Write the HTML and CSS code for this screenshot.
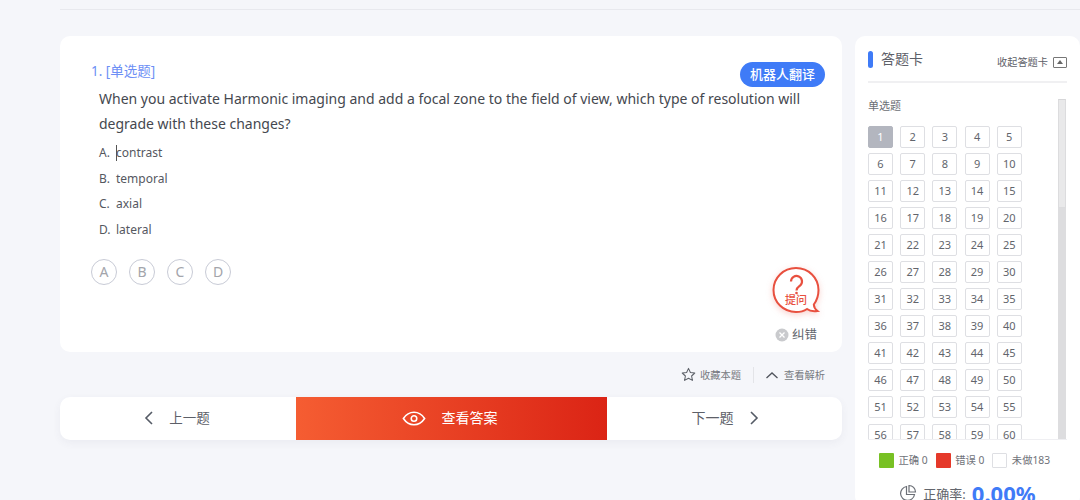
FILE: index.html
```html
<!DOCTYPE html>
<html lang="zh-CN">
<head>
<meta charset="utf-8">
<title>答题</title>
<link rel="stylesheet" href="styles.css">
</head>
<body>
<div class="topline"></div>
<div class="page">
  <main class="main">
    <section class="qcard">
      <div class="qhead">
        <span class="qtype">1. [单选题]</span>
        <span class="translate">机器人翻译</span>
      </div>
      <p class="stem">When you activate Harmonic imaging and add a focal zone to the field of view, which type of resolution will degrade with these changes?</p>
      <ul class="opts">
        <li><span class="ol">A.</span><span class="caret"></span><span>contrast</span></li>
        <li><span class="ol">B.</span><span>temporal</span></li>
        <li><span class="ol">C.</span><span>axial</span></li>
        <li><span class="ol">D.</span><span>lateral</span></li>
      </ul>
      <div class="circles">
        <span class="circle">A</span><span class="circle">B</span><span class="circle">C</span><span class="circle">D</span>
      </div>
      <div class="ask">
        <svg class="ask-bubble" viewBox="0 0 50 50" width="50" height="50">
          <path d="M25 3C12.300 3 2.500 12.800 2.500 25S12.300 47 25 47c4 0 8-1 11-3 2 1.600 6 2.600 10.500 2-2-1.400-3.500-3.500-3.700-6.500C45.800 35.500 47.500 30.500 47.500 25 47.500 12.800 37.700 3 25 3Z" fill="#fff" stroke="#e8503f" stroke-width="2"/>
          <path d="M20 16.500a5.500 5.500 0 1 1 9 4.200c-2.200 1.700-3.500 2.400-3.500 4.800" fill="none" stroke="#e8503f" stroke-width="2.200"/>
          <circle cx="25.500" cy="28" r="1.300" fill="#e8503f"/>
        </svg>
        <span class="ask-t">提问</span>
      </div>
      <div class="report">
        <svg viewBox="0 0 14 14" width="14" height="14"><circle cx="7" cy="7" r="6.500" fill="#c9cacd"/><path d="M4.500 4.500l5 5M9.500 4.500l-5 5" stroke="#fff" stroke-width="1.300"/></svg>
        <span>纠错</span>
      </div>
    </section>
    <div class="tools">
      <span class="tool">
        <svg viewBox="0 0 16 16" width="15" height="15"><path d="M8 1.500l2 4.300 4.700.6-3.400 3.200.9 4.700L8 12l-4.200 2.300.9-4.700L1.300 6.400 6 5.800Z" fill="none" stroke="#5c6068" stroke-width="1.100" stroke-linejoin="round"/></svg>
        <span>收藏本题</span>
      </span>
      <span class="sep"></span>
      <span class="tool tool-b">
        <svg viewBox="0 0 14 14" width="14" height="14"><path d="M1.500 10L7 5l5.500 5" fill="none" stroke="#50545c" stroke-width="1.300"/></svg>
        <span>查看解析</span>
      </span>
    </div>
    <nav class="nav">
      <a class="nav-btn prev">
        <svg viewBox="0 0 10 16" width="10" height="16"><path d="M8 2L2 8l6 6" fill="none" stroke="#555b66" stroke-width="1.600"/></svg>
        <span>上一题</span>
      </a>
      <a class="nav-btn show">
        <svg viewBox="0 0 26 16" width="24" height="15"><path d="M1.500 8C4.500 3.500 8.500 1.300 13 1.300S21.500 3.500 24.500 8C21.500 12.500 17.500 14.700 13 14.700S4.500 12.500 1.500 8Z" fill="none" stroke="#fff" stroke-width="1.700"/><circle cx="13" cy="8" r="3" fill="none" stroke="#fff" stroke-width="1.700"/></svg>
        <span>查看答案</span>
      </a>
      <a class="nav-btn next">
        <span>下一题</span>
        <svg viewBox="0 0 10 16" width="10" height="16"><path d="M2 2l6 6-6 6" fill="none" stroke="#555b66" stroke-width="1.600"/></svg>
      </a>
    </nav>
  </main>
  <aside class="side">
    <header class="side-head">
      <span class="side-title"><i class="bar"></i>答题卡</span>
      <span class="collapse">收起答题卡<span class="collapse-ic"></span></span>
    </header>
    <div class="scroll">
      <div class="list">
        <div class="list-title">单选题</div>
        <div class="grid">
          <span class="cell cur">1</span><span class="cell">2</span><span class="cell">3</span><span class="cell">4</span><span class="cell">5</span>
          <span class="cell">6</span><span class="cell">7</span><span class="cell">8</span><span class="cell">9</span><span class="cell">10</span>
          <span class="cell">11</span><span class="cell">12</span><span class="cell">13</span><span class="cell">14</span><span class="cell">15</span>
          <span class="cell">16</span><span class="cell">17</span><span class="cell">18</span><span class="cell">19</span><span class="cell">20</span>
          <span class="cell">21</span><span class="cell">22</span><span class="cell">23</span><span class="cell">24</span><span class="cell">25</span>
          <span class="cell">26</span><span class="cell">27</span><span class="cell">28</span><span class="cell">29</span><span class="cell">30</span>
          <span class="cell">31</span><span class="cell">32</span><span class="cell">33</span><span class="cell">34</span><span class="cell">35</span>
          <span class="cell">36</span><span class="cell">37</span><span class="cell">38</span><span class="cell">39</span><span class="cell">40</span>
          <span class="cell">41</span><span class="cell">42</span><span class="cell">43</span><span class="cell">44</span><span class="cell">45</span>
          <span class="cell">46</span><span class="cell">47</span><span class="cell">48</span><span class="cell">49</span><span class="cell">50</span>
          <span class="cell">51</span><span class="cell">52</span><span class="cell">53</span><span class="cell">54</span><span class="cell">55</span>
          <span class="cell">56</span><span class="cell">57</span><span class="cell">58</span><span class="cell">59</span><span class="cell">60</span>
        </div>
      </div>
      <div class="track"><div class="thumb"></div></div>
    </div>
    <div class="legend">
      <span class="leg"><i class="sw green"></i>正确 0</span>
      <span class="leg"><i class="sw red"></i>错误 0</span>
      <span class="leg"><i class="sw blank"></i>未做183</span>
    </div>
    <div class="rate">
      <svg viewBox="0 0 18 18" width="18" height="18"><path d="M7.500 2.500A7 7 0 1 0 15.500 10.500H7.500Z" fill="none" stroke="#6b6f76" stroke-width="1.200"/><path d="M10 1.500A6.500 6.500 0 0 1 16.500 8H10Z" fill="none" stroke="#6b6f76" stroke-width="1.200"/></svg>
      <span class="rate-l">正确率:</span>
      <span class="rate-v">0.00%</span>
    </div>
  </aside>
</div>
</body>
</html>
```
FILE: styles.css
```css
* { box-sizing: border-box; }
html, body { margin: 0; height: 500px; overflow: hidden; }
body {
  background: #f5f6fa;
  font-family: "Noto Sans", "Noto Sans CJK SC", sans-serif;
  color: #4a4d54;
}
.topline { height: 10px; margin-left: 60px; border-bottom: 1px solid #e8e9ee; }
.page { display: flex; gap: 13px; padding: 26px 0 0 60px; align-items: flex-start; }
.main { width: 782px; flex: none; }

.qcard {
  position: relative;
  height: 316px;
  background: #fff;
  border-radius: 10px;
  padding: 25px 17px 0 31px;
}
.qhead { display: flex; justify-content: space-between; align-items: flex-start; height: 25px; }
.qtype { margin-top: 1px; font-size: 13.500px; line-height: 19px; color: #6d8ff5; }
.translate {
  margin-top: 1px;
  width: 85px; height: 25px;
  border-radius: 13px;
  background: #3f7bf7;
  color: #fff;
  font-size: 13px; font-weight: 500;
  line-height: 25px; text-align: center;
}
.stem { margin: 0 0 0 8px; font-size: 14px; line-height: 25px; color: #45484f; width: 710px; }
.opts { list-style: none; margin: 4px 0 0 8px; padding: 0; font-size: 12px; color: #55585f; }
.opts li { position: relative; display: flex; height: 25.600px; line-height: 25.600px; }
.ol { width: 17px; flex: none; }
.caret { position: absolute; left: 17px; top: 5px; width: 1px; height: 16px; background: #555; }
.circles { display: flex; gap: 12px; margin-top: 17px; }
.circle {
  width: 26px; height: 26px; border-radius: 50%;
  border: 1px solid #c8cbd6;
  color: #a3a5ab; font-size: 14px; line-height: 24px; text-align: center;
}
.ask { position: absolute; left: 711px; top: 229px; width: 50px; height: 50px; }
.ask-bubble { display: block; filter: drop-shadow(0 2px 3px rgba(232,80,63,.25)); }
.ask-t { position: absolute; left: 0; right: 0; top: 28px; text-align: center; color: #e8503f; font-size: 11px; line-height: 13px; font-weight: 500; }
.report { position: absolute; right: 25px; top: 291px; display: flex; align-items: center; gap: 3px; font-size: 12.500px; line-height: 16px; color: #63666d; }

.tools { display: flex; justify-content: flex-end; align-items: center; height: 45px; padding-right: 17px; font-size: 10.250px; color: #777a81; }
.tool { display: flex; align-items: center; gap: 4px; }
.tool-b { gap: 5px; }
.sep { width: 1px; height: 16px; background: #e3e4e8; margin: 0 11px 0 12px; }

.nav {
  display: flex; height: 43px; background: #fff; border-radius: 10px;
  box-shadow: 0 3px 8px rgba(60,70,100,.06); overflow: hidden;
}
.nav-btn { display: flex; align-items: center; justify-content: center; font-size: 13.500px; line-height: 18px; padding-bottom: 1px; color: #5d6068; }
.prev { width: 236px; gap: 15px; padding-right: 2px; }
.show { width: 311px; gap: 16px; padding-right: 4px; font-size: 14px; color: #fff; background: linear-gradient(90deg, #f55d32, #db2415); }
.next { width: 235px; gap: 15px; padding-left: 1px; font-size: 14px; }

.side { width: 225px; height: 470px; flex: none; background: #fff; border-radius: 10px; padding: 0 13px; }
.side-head {
  display: flex; justify-content: space-between; align-items: flex-end;
  height: 47px; border-bottom: 2px solid #f0f0f2; padding-bottom: 12px;
}
.side-title { display: flex; align-items: center; font-size: 14px; line-height: 20px; color: #5d6068; }
.bar { width: 5px; height: 17px; border-radius: 3px; background: #3f7bf7; margin-right: 8px; }
.collapse { display: flex; align-items: center; font-size: 10.200px; line-height: 14px; color: #5d6068; }
.collapse-ic { position: relative; width: 14px; height: 11px; border: 1px solid #777; border-radius: 1px; margin-left: 5px; }
.collapse-ic::after { content: ""; position: absolute; left: 3px; top: 2px; border: 3px solid transparent; border-top: 0; border-bottom: 4px solid #666; }

.scroll { display: flex; justify-content: space-between; height: 357px; padding-top: 15px; overflow: hidden; border-bottom: 1px solid #efeff2; }
.list { width: 176px; }
.list-title { font-size: 11px; line-height: 16px; color: #6b6e75; margin-bottom: 11.500px; }
.grid { display: grid; grid-template-columns: repeat(5, 25px); column-gap: 7.200px; grid-auto-rows: 22px; row-gap: 5.100px; }
.cell {
  border: 1px solid #dedfe3; border-radius: 2px;
  font-size: 11px; line-height: 20px; text-align: center; color: #62656c;
}
.cur { background: #b3b6bf; border-color: #b3b6bf; color: #fff; }
.track { width: 8px; height: 342px; margin: 1px 1px 0 0; background: #dddddf; }
.thumb { height: 109px; background: #e9e9ea; border: 1px solid #dcdcde; border-top-color: #d6d6d8; }

.legend { display: flex; gap: 8px; margin-top: 13px; padding-left: 11px; font-size: 10.300px; line-height: 15px; color: #6f7279; }
.leg { display: flex; align-items: center; gap: 4.500px; }
.sw { width: 15px; height: 15px; border-radius: 1px; }
.green { background: #78c124; }
.red { background: #e5392a; }
.blank { background: #fff; border: 1px solid #dedfe3; }
.rate { display: flex; align-items: center; justify-content: center; gap: 6px; margin-top: 11px; height: 28px; }
.rate-l { font-size: 13px; color: #63666d; }
.rate-v { font-size: 22px; font-weight: 700; color: #3f7bf7; line-height: 28px; }
```
